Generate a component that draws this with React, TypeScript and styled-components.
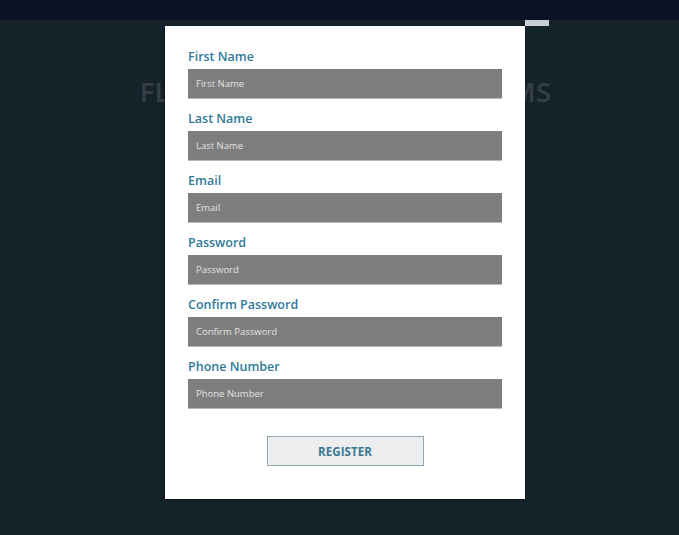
import React from "react";
import styled, { createGlobalStyle } from "styled-components";

const Global = createGlobalStyle`
  html, body { margin: 0; padding: 0; background: #14222a; }
  body { font-family: "Open Sans", "Liberation Sans", sans-serif; }
  * { box-sizing: border-box; }
`;

const Page = styled.div`
  width: 679px;
  height: 535px;
  background: #14222a;
  position: relative;
  overflow: hidden;
`;

const TopBar = styled.div`
  height: 20px;
  background: #0b1226;
`;

const Hero = styled.h1`
  margin: 0;
  padding: 53px 0 0 12px;
  text-align: center;
  font-family: "Open Sans", "Liberation Sans", sans-serif;
  font-weight: 600;
  font-size: 27.5px;
  letter-spacing: 0.3px;
  color: #363f45;
  white-space: nowrap;
`;

const Modal = styled.div`
  position: absolute;
  top: 26px;
  left: 165px;
  width: 360px;
  height: 473px;
  background: #ffffff;
  padding: 21px 23px 0 23px;
  display: flex;
  flex-direction: column;
  box-shadow: -1px 1px 2px rgba(0, 0, 0, 0.4);
`;

const CloseTab = styled.div`
  position: absolute;
  top: -6px;
  right: -24px;
  width: 24px;
  height: 6px;
  background: #c9cdd8;
`;

const Form = styled.form`
  display: flex;
  flex-direction: column;
  gap: 10px;
`;

const Field = styled.div`
  display: flex;
  flex-direction: column;
  gap: 3px;
`;

const Label = styled.label`
  font-size: 12.5px;
  line-height: 19px;
  font-weight: 600;
  color: #2f7a98;
`;

const Input = styled.input`
  width: 314px;
  height: 30px;
  border: none;
  border-bottom: 1px solid #b9b9b9;
  background: #7e7e7e;
  padding: 0 8px;
  font-family: "Open Sans", "Liberation Sans", sans-serif;
  font-size: 9.5px;
  color: #f0f0f0;
  outline: none;
  &::placeholder { color: #e2e2e2; }
`;

const ButtonRow = styled.div`
  display: flex;
  justify-content: center;
  margin-top: 17px;
`;

const Button = styled.button`
  width: 157px;
  height: 30px;
  background: #eceef0;
  border: 1px solid #93a8b0;
  font-family: "Open Sans", "Liberation Sans", sans-serif;
  font-size: 11.5px;
  font-weight: 700;
  color: #3a7891;
  letter-spacing: 0.1px;
`;

const fields = [
  "First Name",
  "Last Name",
  "Email",
  "Password",
  "Confirm Password",
  "Phone Number",
];

export default function App() {
  return (
    <Page>
      <Global />
      <TopBar />
      <Hero>FLAT MODAL REGISTER FORMS</Hero>
      <Modal>
        <CloseTab />
        <Form onSubmit={(e) => e.preventDefault()}>
          {fields.map((f) => (
            <Field key={f}>
              <Label>{f}</Label>
              <Input
                placeholder={f}
                type={f.includes("Password") ? "password" : "text"}
              />
            </Field>
          ))}
          <ButtonRow>
            <Button type="submit">REGISTER</Button>
          </ButtonRow>
        </Form>
      </Modal>
    </Page>
  );
}
